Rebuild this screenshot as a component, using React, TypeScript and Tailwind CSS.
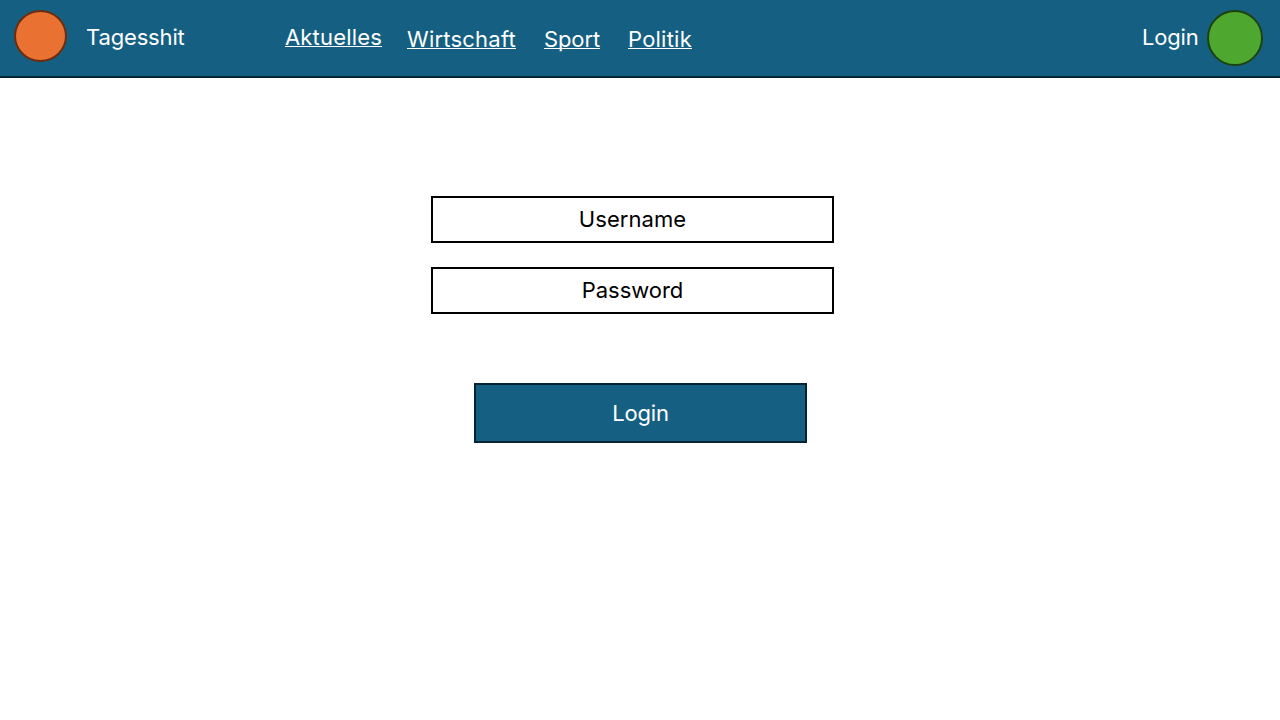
const links = [
  { label: 'Aktuelles', cls: 'mt-[22px] w-[97px] tracking-[0.18px]' },
  { label: 'Wirtschaft', cls: 'ml-[25px] mt-[24px] w-[109px] tracking-[0.22px]' },
  { label: 'Sport', cls: 'ml-[28px] mt-[24px] w-[56px] tracking-[-0.12px]' },
  { label: 'Politik', cls: 'ml-[28px] mt-[24px] w-[64px] tracking-[0.22px]' },
];

const fields = [
  { label: 'Username', cls: 'tracking-[0.08px]' },
  { label: 'Password', cls: 'tracking-[-0.05px]' },
];

export default function App() {
  return (
    <div className="h-[720px] w-[1280px] overflow-hidden bg-white font-[Inter,sans-serif] text-[22px] leading-[30px]">
      <header className="flex h-[78px] items-start border-b-2 border-[#042433] bg-[#156082] text-white">
        <div className="mt-[10px] ml-[14px] h-[52px] w-[53px] rounded-[50%] border-2 border-[#6b2d0d] bg-[#e97132]" />
        <div className="mt-[22px] ml-[19px] w-[99px] whitespace-nowrap tracking-[-0.15px]">Tagesshit</div>
        <nav className="ml-[100px] flex">
          {links.map((link) => (
            <a
              key={link.label}
              href="#"
              className={`whitespace-nowrap underline decoration-1 underline-offset-1 [text-decoration-skip-ink:none] ${link.cls}`}
            >
              {link.label}
            </a>
          ))}
        </nav>
        <div className="mt-[22px] ml-auto w-[56px] whitespace-nowrap tracking-[-0.2px]">Login</div>
        <div className="mt-[10px] mr-[17px] ml-[9px] size-[56px] rounded-full border-2 border-[#1c4210] bg-[#4ea72e]" />
      </header>
      <main className="flex flex-col pt-[118px]">
        <div className="ml-[431px] flex w-[403px] flex-col gap-6">
          {fields.map((field) => (
            <div
              key={field.label}
              className={`flex h-[47px] items-center justify-center border-2 border-black pb-0.5 text-black ${field.cls}`}
            >
              {field.label}
            </div>
          ))}
        </div>
        <button
          type="button"
          className="mt-[69px] ml-[474px] flex h-[60px] w-[333px] items-center justify-center border-2 border-[#042433] bg-[#156082] tracking-[-0.2px] text-white"
        >
          Login
        </button>
      </main>
    </div>
  );
}
